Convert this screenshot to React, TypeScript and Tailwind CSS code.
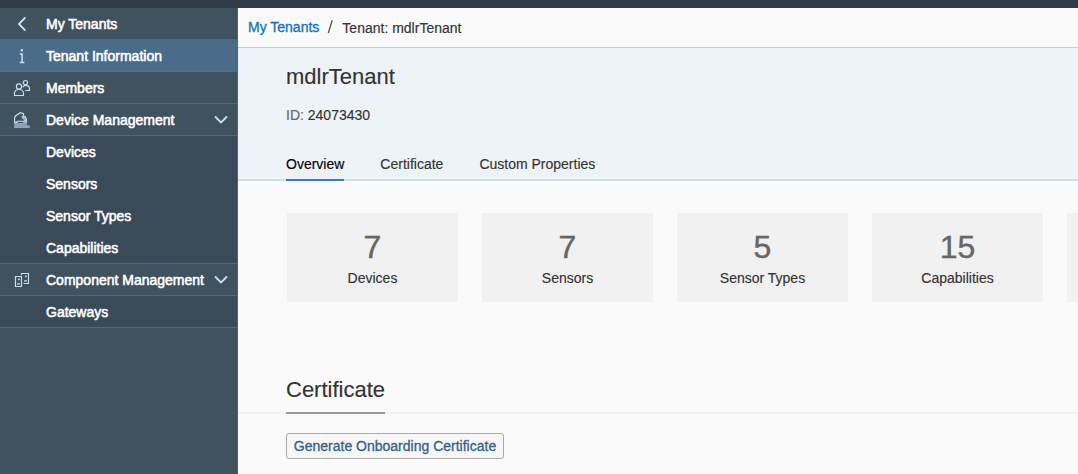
import React from "react";

type IconName = "back" | "info" | "members" | "device" | "component";

function Icon({ name }: { name: IconName }) {
  return (
    <svg className="-mb-px" width="18" height="18" viewBox="0 0 18 18" fill="none" stroke="#c5dff3" strokeWidth="1.15">
      {name === "back" && <path d="M12.4 2.4 6 9l6.4 6.6" strokeWidth="1.9" />}
      {name === "info" && (
        <>
          <circle cx="8.8" cy="3.2" r="1.25" fill="#c5dff3" stroke="none" />
          <path d="M6.8 6.9h2.3v8.6M6.8 15.6h4.6" strokeWidth="1.5" />
        </>
      )}
      {name === "members" && (
        <>
          <circle cx="6" cy="7.4" r="2.6" />
          <path d="M1.5 16.5v-2c0-2.4 1.6-4 4.5-4s4.5 1.6 4.5 4v2z" />
          <circle cx="12.4" cy="3.6" r="2.1" />
          <path d="M9.8 8.2c.6-1.2 1.5-1.9 2.8-1.9 2.3 0 3.9 1.5 3.9 3.4v1.8h-4.3" />
        </>
      )}
      {name === "device" && (
        <>
          <path d="M4.5 11.5H1.6V7c0-.9.4-1.7 1.1-2.3l4.6-3 3.2.9v2M2.6 11.5l2.2-1.3h5.4l1.3 1.3" />
          <path d="M10 4.6 12.4 6l1.1 2.7v3" />
          <path d="M8.6 5.4 11 5l.9 2.8h-2.3zM10.7 8.4h3v3.2h-2z" fill="#a9c4d8" strokeWidth=".4" />
          <path d="M1.2 12h12.6v2.2h2.3c.7 0 .9.6.9 1.3s-.4 1.4-1.1 1.4H1.2z" fill="#8fa6b9" stroke="none" />
          <path d="M1.2 14.4h12.6" stroke="#7b93a6" strokeWidth=".5" />
        </>
      )}
      {name === "component" && (
        <>
          <path d="M2.5 5.5h6v10h-6zM8.5 4V2.5h7v10h-5" />
          <path d="M4 12.9h3M11 9.9h3" strokeWidth="1.2" />
          <path d="M5.2 8.3h1.6M12.2 5.3h1.6" strokeWidth="1.8" />
        </>
      )}
    </svg>
  );
}

interface NavRowProps {
  label: string;
  icon?: IconName;
  expandable?: boolean;
  className: string;
}

function NavRow({ label, icon, expandable, className }: NavRowProps) {
  return (
    <div className={`flex h-8 shrink-0 items-center border-b pr-[9px] ${className}`}>
      <span className="flex w-[46px] shrink-0 pl-[13px]">{icon && <Icon name={icon} />}</span>
      <span className="flex-1 whitespace-nowrap pt-px text-white [-webkit-text-stroke:0.55px_white]">{label}</span>
      {expandable && (
        <svg width="14" height="9" viewBox="0 0 14 9" fill="none" stroke="#c5dff3" strokeWidth="1.9">
          <path d="m1 1.5 6 6 6-6" />
        </svg>
      )}
    </div>
  );
}

const parent = "border-[#526878]";
const child = "bg-[#3a4a59] border-[#3a4a59]";
const lastChild = "bg-[#3a4a59] border-[#526878]";

const stats = [
  { value: 7, label: "Devices" },
  { value: 7, label: "Sensors" },
  { value: 5, label: "Sensor Types" },
  { value: 15, label: "Capabilities" },
];

export default function App() {
  return (
    <div className="flex h-[474px] w-[1078px] flex-col overflow-hidden bg-[#fafafa] font-['Liberation_Sans',Arial,sans-serif] text-sm text-[#333] [-webkit-text-stroke:0.15px_currentColor]">
      <div className="h-2 shrink-0 bg-[#2f3c48]" />
      <div className="flex min-h-0 flex-1">
        <nav className="flex w-[238px] shrink-0 flex-col border-r border-[#4b6479] bg-[#41525f]">
          <NavRow label="My Tenants" icon="back" className={parent} />
          <NavRow label="Tenant Information" icon="info" className="border-[#526f87] bg-[#4a6c89]" />
          <NavRow label="Members" icon="members" className={parent} />
          <NavRow label="Device Management" icon="device" expandable className={parent} />
          <NavRow label="Devices" className={child} />
          <NavRow label="Sensors" className={child} />
          <NavRow label="Sensor Types" className={child} />
          <NavRow label="Capabilities" className={lastChild} />
          <NavRow label="Component Management" icon="component" expandable className={parent} />
          <NavRow label="Gateways" className={lastChild} />
        </nav>

        <main className="flex w-[840px] flex-col overflow-hidden">
          <div className="flex h-10 shrink-0 items-start whitespace-nowrap border-b border-[#ccc] pl-[10px] leading-5">
            <a className="pt-[9px] text-[#0f73b5] [-webkit-text-stroke:0.3px_#0f73b5]">My Tenants</a>
            <svg className="ml-2 mt-3" width="7" height="14" viewBox="0 0 7 14" stroke="#555" strokeWidth="1.3">
              <path d="M5.2.3 1.3 13" />
            </svg>
            <span className="ml-2 pt-[10px]">Tenant: mdlrTenant</span>
          </div>

          <header className="flex h-[133px] shrink-0 flex-col border-b-2 border-[#cbdfed] bg-[#eef3f8] pl-12">
            <h1 className="mt-[14px] text-[22px] leading-[30px]">mdlrTenant</h1>
            <div className="mt-[13px] leading-5">
              <span className="text-[#666]">ID:</span> 24073430
            </div>
            <div className="-mb-0.5 mt-auto flex gap-9 whitespace-nowrap">
              <span className="h-[27px] border-b-2 border-[#427cac] leading-5 text-black">Overview</span>
              <span className="leading-5">Certificate</span>
              <span className="leading-5">Custom Properties</span>
            </div>
          </header>

          <div className="mt-8 flex shrink-0 gap-6 pl-[49px]">
            {stats.map((s) => (
              <div key={s.label} className="flex h-[89px] w-[171px] shrink-0 flex-col items-center bg-[#f1f1f1] pt-4">
                <span className="text-[32px] leading-9 text-[#666] [-webkit-text-stroke:0.4px_#666]">{s.value}</span>
                <span className="mt-[3px] leading-5">{s.label}</span>
              </div>
            ))}
            <div className="h-[89px] w-[171px] shrink-0 bg-[#f1f1f1]" />
          </div>

          <div className="mt-[73px] flex h-[39px] shrink-0 border-b-2 border-[#f1f1f1] pl-12">
            <h2 className="h-[39px] border-b-2 border-[#999] text-[22px] leading-[30px]">Certificate</h2>
          </div>
          <div className="mt-[19px] pl-12">
            <button className="h-[26px] w-[218px] whitespace-nowrap rounded-[3px] border border-[#aaa] bg-[#f7f7f7] text-[#346187] [-webkit-text-stroke:0.3px_#346187]">
              Generate Onboarding Certificate
            </button>
          </div>
        </main>
      </div>
    </div>
  );
}
